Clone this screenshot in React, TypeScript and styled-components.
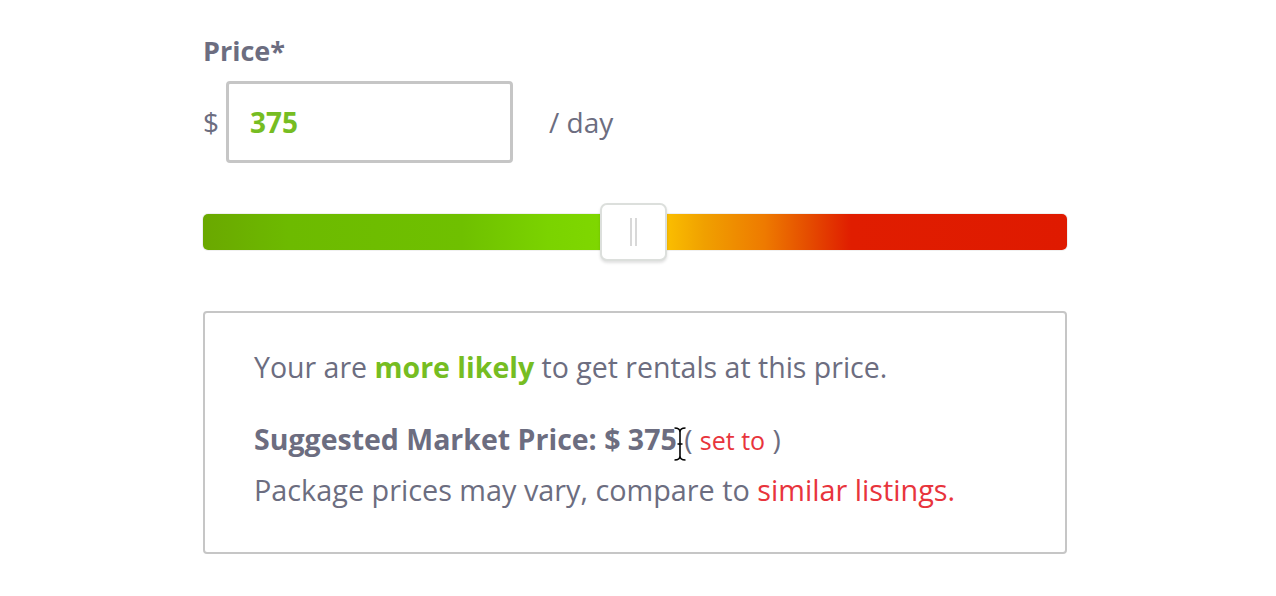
import React from "react";
import styled, { createGlobalStyle } from "styled-components";

const Global = createGlobalStyle`
  html, body { margin: 0; padding: 0; background: #ffffff; }
  body { font-family: "Open Sans", "Noto Sans", sans-serif; color: #6c6d80; }
`;

const Page = styled.div`
  width: 1276px;
  height: 596px;
  box-sizing: border-box;
  padding: 32px 0 0 203px;
`;

const Column = styled.div`
  width: 864px;
  display: flex;
  flex-direction: column;
`;

const Label = styled.div`
  font-size: 27px;
  font-weight: 700;
  line-height: 37px;
  color: #6c6d80;
`;

const PriceRow = styled.div`
  margin-top: 12px;
  display: flex;
  align-items: center;
  height: 82px;
`;

const Currency = styled.span`
  font-size: 28px;
  width: 23px;
  color: #6c6d80;
`;

const InputBox = styled.div`
  box-sizing: border-box;
  width: 287px;
  height: 82px;
  border: 3px solid #c6c6c6;
  border-radius: 4px;
  display: flex;
  align-items: center;
  padding-left: 21px;
  font-size: 28px;
  font-weight: 700;
  color: #76bd22;
`;

const Unit = styled.span`
  margin-left: 36px;
  font-size: 28px;
  color: #6c6d80;
`;

const SliderWrap = styled.div`
  margin-top: 40px;
  position: relative;
  height: 58px;
  display: flex;
  align-items: center;
`;

const Track = styled.div`
  width: 864px;
  height: 36px;
  border-radius: 5px;
  box-shadow: 0 0 0 1px rgba(0, 0, 0, 0.06);
  background: linear-gradient(
    to right,
    #6aa800 0%,
    #6dba00 10%,
    #6fc000 30%,
    #7bd300 40%,
    #7fd700 46%,
    #fbbf00 53.5%,
    #f0a000 58%,
    #ee7a00 65%,
    #e54d00 70%,
    #e01d00 75%,
    #df1a00 100%
  );
`;

const Thumb = styled.div`
  position: absolute;
  left: 397px;
  top: 0;
  box-sizing: border-box;
  width: 67px;
  height: 58px;
  background: #ffffff;
  border: 2px solid #dcdfdc;
  border-radius: 7px;
  box-shadow: 0 2px 3px rgba(0, 0, 0, 0.12);
  display: flex;
  align-items: center;
  justify-content: center;
  gap: 3px;
`;

const Grip = styled.span`
  width: 2px;
  height: 28px;
  background: #d8d8d8;
`;

const InfoBox = styled.div`
  margin-top: 50px;
  box-sizing: border-box;
  width: 864px;
  height: 243px;
  border: 2px solid #c6c6c6;
  border-radius: 4px;
  padding: 29px 0 0 49px;
`;

const Line = styled.p<{ $gap?: number; $size?: number }>`
  margin: ${(p) => p.$gap ?? 0}px 0 0 0;
  font-size: ${(p) => p.$size ?? 28.5}px;
  line-height: 50px;
  color: #6c6d80;
  white-space: nowrap;
  position: relative;
`;

const Green = styled.strong`
  color: #76bd22;
  font-weight: 700;
`;

const Strong = styled.strong`
  font-weight: 700;
`;

const Red = styled.span<{ $small?: boolean }>`
  color: #e8343c;
  font-size: ${(p) => (p.$small ? "25px" : "inherit")};
`;

const Paren = styled.span`
  font-size: 28px;
`;

const CursorWrap = styled.span`
  display: inline-block;
  position: relative;
  width: 0;
`;

const Cursor = styled.svg`
  position: absolute;
  left: -4px;
  top: -24px;
`;

const IBeam = () => (
  <Cursor width="14" height="36" viewBox="0 0 14 36">
    <path
      d="M1.5 2 C5 2 7 3 7 6 L7 30 C7 33 5 34 1.5 34 M12.5 2 C9 2 7 3 7 6 M7 30 C7 33 9 34 12.5 34 M4.5 18 L9.5 18"
      fill="none"
      stroke="#ffffff"
      strokeWidth="3.5"
    />
    <path
      d="M1.5 2 C5 2 7 3 7 6 L7 30 C7 33 5 34 1.5 34 M12.5 2 C9 2 7 3 7 6 M7 30 C7 33 9 34 12.5 34 M4.5 18 L9.5 18"
      fill="none"
      stroke="#000000"
      strokeWidth="1.6"
    />
  </Cursor>
);

export default function App() {
  return (
    <Page>
      <Global />
      <Column>
        <Label>Price*</Label>
        <PriceRow>
          <Currency>$</Currency>
          <InputBox>375</InputBox>
          <Unit>/ day</Unit>
        </PriceRow>
        <SliderWrap>
          <Track />
          <Thumb>
            <Grip />
            <Grip />
          </Thumb>
        </SliderWrap>
        <InfoBox>
          <Line>
            Your are <Green>more likely</Green> to get rentals at this price.
          </Line>
          <Line $gap={22}>
            <Strong>Suggested Market Price: $ 375</Strong>
            <CursorWrap>
              <IBeam />
            </CursorWrap>{" "}
            <Paren>(</Paren> <Red $small>set to</Red> <Paren>)</Paren>
          </Line>
          <Line $size={28.8}>
            Package prices may vary, compare to <Red>similar listings.</Red>
          </Line>
        </InfoBox>
      </Column>
    </Page>
  );
}
